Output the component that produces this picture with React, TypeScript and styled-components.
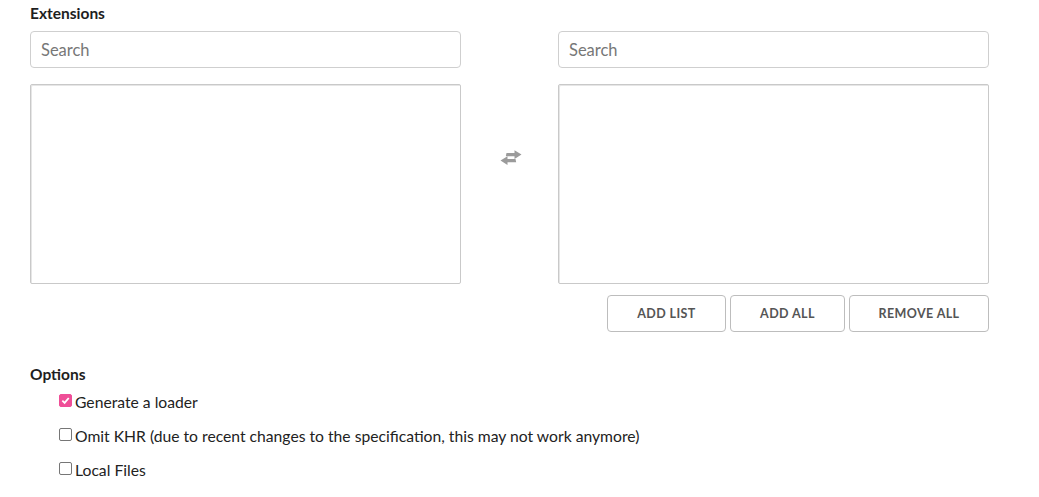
import React from "react";
import styled, { createGlobalStyle } from "styled-components";

const Global = createGlobalStyle`
  html, body { margin: 0; padding: 0; background: #fff; }
  body { font-family: "Lato", "Noto Sans", sans-serif; color: #222; }
`;

const Page = styled.div`
  padding: 3px 0 0 30px;
  width: 959px;
`;

const Heading = styled.h3`
  margin: 0;
  font-size: 15.5px;
  line-height: 20px;
  font-weight: 700;
  color: #1e1e1e;
`;

const Transfer = styled.div`
  display: grid;
  grid-template-columns: 431px 97px 431px;
  grid-template-rows: 37px 200px;
  row-gap: 16px;
  margin-top: 8px;
`;

const SearchInput = styled.input`
  box-sizing: border-box;
  width: 100%;
  height: 37px;
  border: 1px solid #cfcfcf;
  border-radius: 4px;
  padding: 0 10px;
  font-family: inherit;
  font-size: 16.5px;
  color: #333;
  outline: none;
  &::placeholder { color: #777; }
`;

const ListBox = styled.div`
  box-sizing: border-box;
  height: 200px;
  border: 1px solid #c9c9c9;
  box-shadow: inset 1px 1px 0 #e6e6e6;
  border-radius: 2px;
`;

const Swap = styled.div`
  display: flex;
  justify-content: center;
  align-items: flex-start;
  padding-top: 66px;
  padding-left: 2px;
`;

const ButtonRow = styled.div`
  display: flex;
  justify-content: flex-end;
  gap: 4px;
  margin-top: 11px;
  width: 959px;
`;

const ActionButton = styled.button<{ $w: number }>`
  box-sizing: border-box;
  width: ${(p) => p.$w}px;
  height: 37px;
  background: #fff;
  border: 1px solid #bdbdbd;
  border-radius: 4px;
  font-family: inherit;
  font-size: 12.5px;
  font-weight: 700;
  letter-spacing: 0.4px;
  color: #555;
  text-transform: uppercase;
`;

const OptionsHeading = styled(Heading)`
  margin-top: 32px;
`;

const OptionList = styled.div`
  display: flex;
  flex-direction: column;
  padding-left: 29px;
  margin-top: 1px;
`;

const OptionRow = styled.label`
  display: flex;
  align-items: center;
  height: 34px;
  font-size: 15.7px;
  color: #222;
`;

const Check = styled.span<{ $on: boolean }>`
  box-sizing: border-box;
  width: 13px;
  height: 13px;
  margin-right: 3px;
  margin-top: -3px;
  border-radius: 2px;
  border: 1px solid ${(p) => (p.$on ? "#ef4e97" : "#767676")};
  background: ${(p) => (p.$on ? "#ef4e97" : "#fff")};
  display: flex;
  align-items: center;
  justify-content: center;
`;

const options = [
  { label: "Generate a loader", on: true },
  { label: "Omit KHR (due to recent changes to the specification, this may not work anymore)", on: false },
  { label: "Local Files", on: false },
];

function ExchangeIcon() {
  return (
    <svg width="22" height="15" viewBox="0 0 22 15" fill="#9b9b9b">
      <path d="M6.5 3 L14.5 3 L14.5 0.2 L21.5 4.6 L14.5 9 L14.5 6.2 L5.8 6.2 Z" />
      <path d="M15.5 9 L7.5 9 L7.5 6.2 L0.5 10.6 L7.5 15 L7.5 12.2 L16.2 12.2 Z" />
    </svg>
  );
}

export default function App() {
  return (
    <>
      <Global />
      <Page>
        <Heading>Extensions</Heading>
        <Transfer>
          <SearchInput placeholder="Search" />
          <div />
          <SearchInput placeholder="Search" />
          <ListBox />
          <Swap>
            <ExchangeIcon />
          </Swap>
          <ListBox />
        </Transfer>
        <ButtonRow>
          <ActionButton $w={119}>Add List</ActionButton>
          <ActionButton $w={115}>Add All</ActionButton>
          <ActionButton $w={140}>Remove All</ActionButton>
        </ButtonRow>
        <OptionsHeading>Options</OptionsHeading>
        <OptionList>
          {options.map((o) => (
            <OptionRow key={o.label}>
              <Check $on={o.on}>
                {o.on && (
                  <svg width="9" height="9" viewBox="0 0 10 10">
                    <path d="M1.5 5.2 L4 7.6 L8.6 2.2" stroke="#fff" strokeWidth="2" fill="none" />
                  </svg>
                )}
              </Check>
              {o.label}
            </OptionRow>
          ))}
        </OptionList>
      </Page>
    </>
  );
}
